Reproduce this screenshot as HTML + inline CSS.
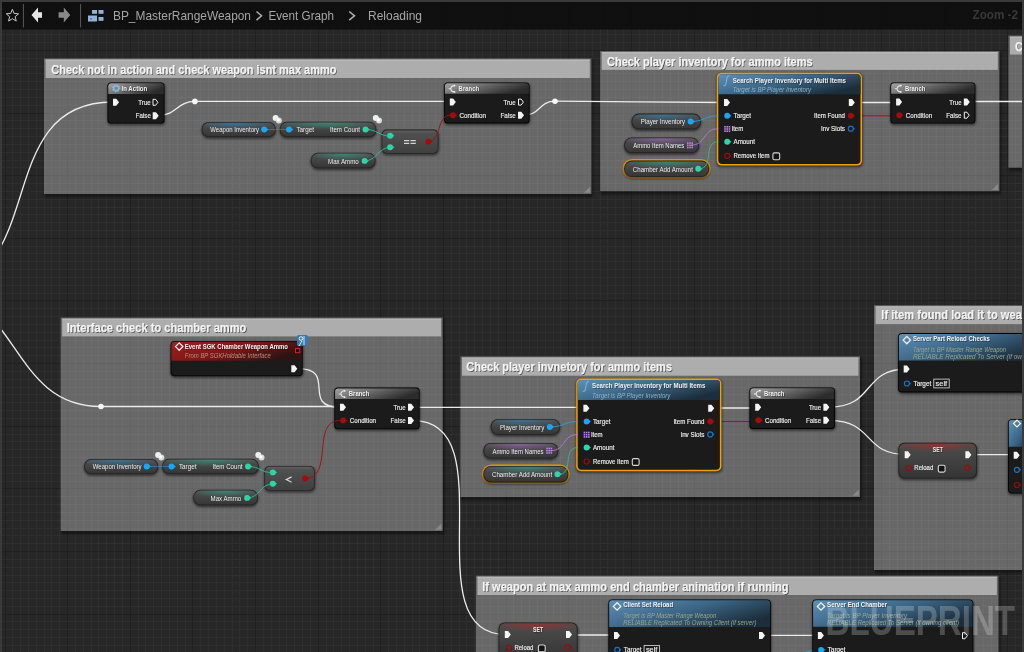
<!DOCTYPE html>
<html><head><meta charset="utf-8"><style>
html,body{margin:0;padding:0;width:1024px;height:652px;overflow:hidden;background:#262626}
svg{display:block;will-change:transform;-webkit-font-smoothing:antialiased;font-family:"Liberation Sans",sans-serif}
</style></head><body>
<svg width="1024" height="652" viewBox="0 0 1024 652">
<defs>
<filter id="blur1" x="-20%" y="-20%" width="140%" height="140%"><feGaussianBlur stdDeviation="1"/></filter>
<filter id="blur2" x="-5%" y="-5%" width="110%" height="110%"><feGaussianBlur stdDeviation="1.5"/></filter>
<linearGradient id="cglow" x1="0" y1="0" x2="1" y2="1"><stop offset="0" stop-color="#fff" stop-opacity="0.06"/><stop offset="0.3" stop-color="#fff" stop-opacity="0"/></linearGradient>
<linearGradient id="gpure" x1="0" y1="0" x2="1" y2="0.4"><stop offset="0" stop-color="#a4a4a4"/><stop offset="0.4" stop-color="#747474"/><stop offset="1" stop-color="#2c2c2c"/></linearGradient>
<linearGradient id="gpill" x1="0" y1="0" x2="0" y2="1"><stop offset="0" stop-color="#505050"/><stop offset="1" stop-color="#363636"/></linearGradient>
<linearGradient id="gop" x1="0" y1="0" x2="0" y2="1"><stop offset="0" stop-color="#666" stop-opacity="0.95"/><stop offset="0.12" stop-color="#545454" stop-opacity="0.92"/><stop offset="1" stop-color="#424242" stop-opacity="0.92"/></linearGradient>
<radialGradient id="tblue" cx="0.45" cy="0" r="0.55"><stop offset="0" stop-color="#2a9ee8" stop-opacity="0.45"/><stop offset="1" stop-color="#2a9ee8" stop-opacity="0"/></radialGradient>
<radialGradient id="tgreen" cx="0.5" cy="0" r="0.55"><stop offset="0" stop-color="#2cd6a8" stop-opacity="0.4"/><stop offset="1" stop-color="#2cd6a8" stop-opacity="0"/></radialGradient>
<linearGradient id="gfunc" x1="0" y1="0" x2="1" y2="0.6"><stop offset="0" stop-color="#5e90b6"/><stop offset="0.5" stop-color="#3d6788"/><stop offset="1" stop-color="#1c2e3c"/></linearGradient>
<linearGradient id="gevent" x1="0" y1="0" x2="1" y2="0.5"><stop offset="0" stop-color="#a21e1e"/><stop offset="0.55" stop-color="#7c1717"/><stop offset="1" stop-color="#2c1414"/></linearGradient>
<linearGradient id="gset" x1="0" y1="0" x2="0" y2="1"><stop offset="0" stop-color="#4d4d4d"/><stop offset="1" stop-color="#353535"/></linearGradient>
<radialGradient id="tpurple" cx="0.5" cy="0" r="0.55"><stop offset="0" stop-color="#c47ef5" stop-opacity="0.45"/><stop offset="1" stop-color="#c47ef5" stop-opacity="0"/></radialGradient>
<radialGradient id="tred" cx="0.5" cy="0" r="0.6"><stop offset="0" stop-color="#c81e1e" stop-opacity="0.55"/><stop offset="1" stop-color="#d02020" stop-opacity="0"/></radialGradient>
</defs>
<rect width="1024" height="652" fill="#262626"/>
<g opacity="1.0">
<rect x="0" y="0" width="1024" height="652" fill="#272727"/>
<path d="M12.5 0V652M20.5 0V652M28.5 0V652M36.5 0V652M44.5 0V652M51.5 0V652M59.5 0V652M75.5 0V652M83.5 0V652M91.5 0V652M98.5 0V652M106.5 0V652M114.5 0V652M122.5 0V652M138.5 0V652M145.5 0V652M153.5 0V652M161.5 0V652M169.5 0V652M177.5 0V652M185.5 0V652M200.5 0V652M208.5 0V652M216.5 0V652M224.5 0V652M232.5 0V652M239.5 0V652M247.5 0V652M263.5 0V652M271.5 0V652M279.5 0V652M286.5 0V652M294.5 0V652M302.5 0V652M310.5 0V652M326.5 0V652M333.5 0V652M341.5 0V652M349.5 0V652M357.5 0V652M365.5 0V652M373.5 0V652M388.5 0V652M396.5 0V652M404.5 0V652M412.5 0V652M419.5 0V652M427.5 0V652M435.5 0V652M451.5 0V652M459.5 0V652M466.5 0V652M474.5 0V652M482.5 0V652M490.5 0V652M498.5 0V652M513.5 0V652M521.5 0V652M529.5 0V652M537.5 0V652M545.5 0V652M553.5 0V652M560.5 0V652M576.5 0V652M584.5 0V652M592.5 0V652M600.5 0V652M607.5 0V652M615.5 0V652M623.5 0V652M639.5 0V652M647.5 0V652M654.5 0V652M662.5 0V652M670.5 0V652M678.5 0V652M686.5 0V652M701.5 0V652M709.5 0V652M717.5 0V652M725.5 0V652M733.5 0V652M741.5 0V652M748.5 0V652M764.5 0V652M772.5 0V652M780.5 0V652M788.5 0V652M795.5 0V652M803.5 0V652M811.5 0V652M827.5 0V652M834.5 0V652M842.5 0V652M850.5 0V652M858.5 0V652M866.5 0V652M874.5 0V652M889.5 0V652M897.5 0V652M905.5 0V652M913.5 0V652M921.5 0V652M928.5 0V652M936.5 0V652M952.5 0V652M960.5 0V652M968.5 0V652M975.5 0V652M983.5 0V652M991.5 0V652M999.5 0V652M1015.5 0V652M1022.5 0V652M0 3.5H1024M0 11.5H1024M0 19.5H1024M0 26.5H1024M0 34.5H1024M0 42.5H1024M0 58.5H1024M0 66.5H1024M0 73.5H1024M0 81.5H1024M0 89.5H1024M0 97.5H1024M0 105.5H1024M0 120.5H1024M0 128.5H1024M0 136.5H1024M0 144.5H1024M0 152.5H1024M0 160.5H1024M0 167.5H1024M0 183.5H1024M0 191.5H1024M0 199.5H1024M0 207.5H1024M0 214.5H1024M0 222.5H1024M0 230.5H1024M0 246.5H1024M0 253.5H1024M0 261.5H1024M0 269.5H1024M0 277.5H1024M0 285.5H1024M0 293.5H1024M0 308.5H1024M0 316.5H1024M0 324.5H1024M0 332.5H1024M0 340.5H1024M0 347.5H1024M0 355.5H1024M0 371.5H1024M0 379.5H1024M0 387.5H1024M0 394.5H1024M0 402.5H1024M0 410.5H1024M0 418.5H1024M0 434.5H1024M0 441.5H1024M0 449.5H1024M0 457.5H1024M0 465.5H1024M0 473.5H1024M0 481.5H1024M0 496.5H1024M0 504.5H1024M0 512.5H1024M0 520.5H1024M0 528.5H1024M0 535.5H1024M0 543.5H1024M0 559.5H1024M0 567.5H1024M0 575.5H1024M0 582.5H1024M0 590.5H1024M0 598.5H1024M0 606.5H1024M0 621.5H1024M0 629.5H1024M0 637.5H1024M0 645.5H1024" stroke="#2e2e2e" stroke-width="1" fill="none"/>
<path d="M5.5 0V652M67.5 0V652M130.5 0V652M192.5 0V652M255.5 0V652M318.5 0V652M380.5 0V652M443.5 0V652M506.5 0V652M568.5 0V652M631.5 0V652M694.5 0V652M756.5 0V652M819.5 0V652M881.5 0V652M944.5 0V652M1007.5 0V652M0 50.5H1024M0 113.5H1024M0 175.5H1024M0 238.5H1024M0 300.5H1024M0 363.5H1024M0 426.5H1024M0 488.5H1024M0 551.5H1024M0 614.5H1024" stroke="#202020" stroke-width="1" fill="none"/>
</g>
<rect x="44.5" y="59.4" width="548.9" height="138.1" fill="#000" opacity="0.38" filter="url(#blur1)"/>
<rect x="44" y="58.4" width="547.4" height="135.6" fill="#262626"/>
<g opacity="1.0">
<rect x="44" y="58.4" width="547.4" height="135.6" fill="#272727"/>
<path d="M44.5 58.4V194M51.5 58.4V194M59.5 58.4V194M75.5 58.4V194M83.5 58.4V194M91.5 58.4V194M98.5 58.4V194M106.5 58.4V194M114.5 58.4V194M122.5 58.4V194M138.5 58.4V194M145.5 58.4V194M153.5 58.4V194M161.5 58.4V194M169.5 58.4V194M177.5 58.4V194M185.5 58.4V194M200.5 58.4V194M208.5 58.4V194M216.5 58.4V194M224.5 58.4V194M232.5 58.4V194M239.5 58.4V194M247.5 58.4V194M263.5 58.4V194M271.5 58.4V194M279.5 58.4V194M286.5 58.4V194M294.5 58.4V194M302.5 58.4V194M310.5 58.4V194M326.5 58.4V194M333.5 58.4V194M341.5 58.4V194M349.5 58.4V194M357.5 58.4V194M365.5 58.4V194M373.5 58.4V194M388.5 58.4V194M396.5 58.4V194M404.5 58.4V194M412.5 58.4V194M419.5 58.4V194M427.5 58.4V194M435.5 58.4V194M451.5 58.4V194M459.5 58.4V194M466.5 58.4V194M474.5 58.4V194M482.5 58.4V194M490.5 58.4V194M498.5 58.4V194M513.5 58.4V194M521.5 58.4V194M529.5 58.4V194M537.5 58.4V194M545.5 58.4V194M553.5 58.4V194M560.5 58.4V194M576.5 58.4V194M584.5 58.4V194M44 66.5H591.4M44 73.5H591.4M44 81.5H591.4M44 89.5H591.4M44 97.5H591.4M44 105.5H591.4M44 120.5H591.4M44 128.5H591.4M44 136.5H591.4M44 144.5H591.4M44 152.5H591.4M44 160.5H591.4M44 167.5H591.4M44 183.5H591.4M44 191.5H591.4" stroke="#2e2e2e" stroke-width="1" fill="none"/>
<path d="M67.5 58.4V194M130.5 58.4V194M192.5 58.4V194M255.5 58.4V194M318.5 58.4V194M380.5 58.4V194M443.5 58.4V194M506.5 58.4V194M568.5 58.4V194M44 113.5H591.4M44 175.5H591.4" stroke="#222222" stroke-width="1" fill="none"/>
</g>
<rect x="44" y="58.4" width="547.4" height="135.6" fill="#ffffff" fill-opacity="0.3"/>
<rect x="45.6" y="59.6" width="544.1999999999999" height="18.400000000000002" fill="#adadad"/>
<rect x="45.6" y="59.6" width="544.1999999999999" height="1" fill="#bdbdbd"/>
<text x="52.1" y="74.6" font-size="12.6" font-weight="bold" font-style="normal" fill="#000" fill-opacity="0.55" text-anchor="start" textLength="285.2" lengthAdjust="spacingAndGlyphs">Check not in action and check weapon isnt max ammo</text>
<text x="51.3" y="73.8" font-size="12.6" font-weight="bold" font-style="normal" fill="#f4f4f4" text-anchor="start" textLength="285.2" lengthAdjust="spacingAndGlyphs" stroke="#f4f4f4" stroke-width="0.25">Check not in action and check weapon isnt max ammo</text>
<path d="M583.8 192.8L590.1999999999999 192.8L590.1999999999999 186.4Z" fill="#909090" fill-opacity="0.8"/>
<rect x="600.6" y="52" width="400.79999999999995" height="142.7" fill="#000" opacity="0.38" filter="url(#blur1)"/>
<rect x="600.1" y="51" width="399.29999999999995" height="140.2" fill="#262626"/>
<g opacity="1.0">
<rect x="600.1" y="51" width="399.29999999999995" height="140.2" fill="#272727"/>
<path d="M607.5 51V191.2M615.5 51V191.2M623.5 51V191.2M639.5 51V191.2M647.5 51V191.2M654.5 51V191.2M662.5 51V191.2M670.5 51V191.2M678.5 51V191.2M686.5 51V191.2M701.5 51V191.2M709.5 51V191.2M717.5 51V191.2M725.5 51V191.2M733.5 51V191.2M741.5 51V191.2M748.5 51V191.2M764.5 51V191.2M772.5 51V191.2M780.5 51V191.2M788.5 51V191.2M795.5 51V191.2M803.5 51V191.2M811.5 51V191.2M827.5 51V191.2M834.5 51V191.2M842.5 51V191.2M850.5 51V191.2M858.5 51V191.2M866.5 51V191.2M874.5 51V191.2M889.5 51V191.2M897.5 51V191.2M905.5 51V191.2M913.5 51V191.2M921.5 51V191.2M928.5 51V191.2M936.5 51V191.2M952.5 51V191.2M960.5 51V191.2M968.5 51V191.2M975.5 51V191.2M983.5 51V191.2M991.5 51V191.2M600.1 58.5H999.4M600.1 66.5H999.4M600.1 73.5H999.4M600.1 81.5H999.4M600.1 89.5H999.4M600.1 97.5H999.4M600.1 105.5H999.4M600.1 120.5H999.4M600.1 128.5H999.4M600.1 136.5H999.4M600.1 144.5H999.4M600.1 152.5H999.4M600.1 160.5H999.4M600.1 167.5H999.4M600.1 183.5H999.4" stroke="#2e2e2e" stroke-width="1" fill="none"/>
<path d="M631.5 51V191.2M694.5 51V191.2M756.5 51V191.2M819.5 51V191.2M881.5 51V191.2M944.5 51V191.2M600.1 113.5H999.4M600.1 175.5H999.4" stroke="#222222" stroke-width="1" fill="none"/>
</g>
<rect x="600.1" y="51" width="399.29999999999995" height="140.2" fill="#ffffff" fill-opacity="0.3"/>
<rect x="601.7" y="52.2" width="396.09999999999997" height="17.700000000000006" fill="#adadad"/>
<rect x="601.7" y="52.2" width="396.09999999999997" height="1" fill="#bdbdbd"/>
<text x="607.8" y="66.6" font-size="12.6" font-weight="bold" font-style="normal" fill="#000" fill-opacity="0.55" text-anchor="start" textLength="205.6" lengthAdjust="spacingAndGlyphs">Check player inventory for ammo items</text>
<text x="607.0" y="65.8" font-size="12.6" font-weight="bold" font-style="normal" fill="#f4f4f4" text-anchor="start" textLength="205.6" lengthAdjust="spacingAndGlyphs" stroke="#f4f4f4" stroke-width="0.25">Check player inventory for ammo items</text>
<path d="M991.8 190.0L998.1999999999999 190.0L998.1999999999999 183.6Z" fill="#909090" fill-opacity="0.8"/>
<rect x="1008.9" y="36.5" width="33.10000000000002" height="134.7" fill="#000" opacity="0.38" filter="url(#blur1)"/>
<rect x="1008.4" y="35.5" width="31.600000000000023" height="132.2" fill="#262626"/>
<g opacity="1.0">
<rect x="1008.4" y="35.5" width="31.600000000000023" height="132.2" fill="#272727"/>
<path d="M1015.5 35.5V167.7M1022.5 35.5V167.7M1030.5 35.5V167.7M1038.5 35.5V167.7M1008.4 42.5H1040M1008.4 58.5H1040M1008.4 66.5H1040M1008.4 73.5H1040M1008.4 81.5H1040M1008.4 89.5H1040M1008.4 97.5H1040M1008.4 105.5H1040M1008.4 120.5H1040M1008.4 128.5H1040M1008.4 136.5H1040M1008.4 144.5H1040M1008.4 152.5H1040M1008.4 160.5H1040" stroke="#2e2e2e" stroke-width="1" fill="none"/>
<path d="M1008.4 50.5H1040M1008.4 113.5H1040" stroke="#222222" stroke-width="1" fill="none"/>
</g>
<rect x="1008.4" y="35.5" width="31.600000000000023" height="132.2" fill="#ffffff" fill-opacity="0.3"/>
<rect x="1010.0" y="36.7" width="28.400000000000023" height="17.8" fill="#adadad"/>
<rect x="1010.0" y="36.7" width="28.400000000000023" height="1" fill="#bdbdbd"/>
<text x="1015.8" y="51.3" font-size="12.6" font-weight="bold" font-style="normal" fill="#000" fill-opacity="0.55" text-anchor="start" textLength="48.0" lengthAdjust="spacingAndGlyphs">Chamber</text>
<text x="1015.0" y="50.5" font-size="12.6" font-weight="bold" font-style="normal" fill="#f4f4f4" text-anchor="start" textLength="48.0" lengthAdjust="spacingAndGlyphs" stroke="#f4f4f4" stroke-width="0.25">Chamber</text>
<path d="M1032.4 166.5L1038.8 166.5L1038.8 160.1Z" fill="#909090" fill-opacity="0.8"/>
<rect x="61.1" y="318.5" width="383.59999999999997" height="216.0" fill="#000" opacity="0.38" filter="url(#blur1)"/>
<rect x="60.6" y="317.5" width="382.09999999999997" height="213.5" fill="#262626"/>
<g opacity="1.0">
<rect x="60.6" y="317.5" width="382.09999999999997" height="213.5" fill="#272727"/>
<path d="M75.5 317.5V531M83.5 317.5V531M91.5 317.5V531M98.5 317.5V531M106.5 317.5V531M114.5 317.5V531M122.5 317.5V531M138.5 317.5V531M145.5 317.5V531M153.5 317.5V531M161.5 317.5V531M169.5 317.5V531M177.5 317.5V531M185.5 317.5V531M200.5 317.5V531M208.5 317.5V531M216.5 317.5V531M224.5 317.5V531M232.5 317.5V531M239.5 317.5V531M247.5 317.5V531M263.5 317.5V531M271.5 317.5V531M279.5 317.5V531M286.5 317.5V531M294.5 317.5V531M302.5 317.5V531M310.5 317.5V531M326.5 317.5V531M333.5 317.5V531M341.5 317.5V531M349.5 317.5V531M357.5 317.5V531M365.5 317.5V531M373.5 317.5V531M388.5 317.5V531M396.5 317.5V531M404.5 317.5V531M412.5 317.5V531M419.5 317.5V531M427.5 317.5V531M435.5 317.5V531M60.6 324.5H442.7M60.6 332.5H442.7M60.6 340.5H442.7M60.6 347.5H442.7M60.6 355.5H442.7M60.6 371.5H442.7M60.6 379.5H442.7M60.6 387.5H442.7M60.6 394.5H442.7M60.6 402.5H442.7M60.6 410.5H442.7M60.6 418.5H442.7M60.6 434.5H442.7M60.6 441.5H442.7M60.6 449.5H442.7M60.6 457.5H442.7M60.6 465.5H442.7M60.6 473.5H442.7M60.6 481.5H442.7M60.6 496.5H442.7M60.6 504.5H442.7M60.6 512.5H442.7M60.6 520.5H442.7M60.6 528.5H442.7" stroke="#2e2e2e" stroke-width="1" fill="none"/>
<path d="M67.5 317.5V531M130.5 317.5V531M192.5 317.5V531M255.5 317.5V531M318.5 317.5V531M380.5 317.5V531M60.6 363.5H442.7M60.6 426.5H442.7M60.6 488.5H442.7" stroke="#222222" stroke-width="1" fill="none"/>
</g>
<rect x="60.6" y="317.5" width="382.09999999999997" height="213.5" fill="#ffffff" fill-opacity="0.3"/>
<rect x="62.2" y="318.7" width="378.9" height="17.699999999999978" fill="#adadad"/>
<rect x="62.2" y="318.7" width="378.9" height="1" fill="#bdbdbd"/>
<text x="67.5" y="332.7" font-size="12.6" font-weight="bold" font-style="normal" fill="#000" fill-opacity="0.55" text-anchor="start" textLength="179.7" lengthAdjust="spacingAndGlyphs">Interface check to chamber ammo</text>
<text x="66.7" y="331.9" font-size="12.6" font-weight="bold" font-style="normal" fill="#f4f4f4" text-anchor="start" textLength="179.7" lengthAdjust="spacingAndGlyphs" stroke="#f4f4f4" stroke-width="0.25">Interface check to chamber ammo</text>
<path d="M435.09999999999997 529.8L441.5 529.8L441.5 523.4Z" fill="#909090" fill-opacity="0.8"/>
<rect x="460.9" y="357.4" width="401.1" height="143.10000000000002" fill="#000" opacity="0.38" filter="url(#blur1)"/>
<rect x="460.4" y="356.4" width="399.6" height="140.60000000000002" fill="#262626"/>
<g opacity="1.0">
<rect x="460.4" y="356.4" width="399.6" height="140.60000000000002" fill="#272727"/>
<path d="M466.5 356.4V497M474.5 356.4V497M482.5 356.4V497M490.5 356.4V497M498.5 356.4V497M513.5 356.4V497M521.5 356.4V497M529.5 356.4V497M537.5 356.4V497M545.5 356.4V497M553.5 356.4V497M560.5 356.4V497M576.5 356.4V497M584.5 356.4V497M592.5 356.4V497M600.5 356.4V497M607.5 356.4V497M615.5 356.4V497M623.5 356.4V497M639.5 356.4V497M647.5 356.4V497M654.5 356.4V497M662.5 356.4V497M670.5 356.4V497M678.5 356.4V497M686.5 356.4V497M701.5 356.4V497M709.5 356.4V497M717.5 356.4V497M725.5 356.4V497M733.5 356.4V497M741.5 356.4V497M748.5 356.4V497M764.5 356.4V497M772.5 356.4V497M780.5 356.4V497M788.5 356.4V497M795.5 356.4V497M803.5 356.4V497M811.5 356.4V497M827.5 356.4V497M834.5 356.4V497M842.5 356.4V497M850.5 356.4V497M858.5 356.4V497M460.4 371.5H860M460.4 379.5H860M460.4 387.5H860M460.4 394.5H860M460.4 402.5H860M460.4 410.5H860M460.4 418.5H860M460.4 434.5H860M460.4 441.5H860M460.4 449.5H860M460.4 457.5H860M460.4 465.5H860M460.4 473.5H860M460.4 481.5H860M460.4 496.5H860" stroke="#2e2e2e" stroke-width="1" fill="none"/>
<path d="M506.5 356.4V497M568.5 356.4V497M631.5 356.4V497M694.5 356.4V497M756.5 356.4V497M819.5 356.4V497M460.4 363.5H860M460.4 426.5H860M460.4 488.5H860" stroke="#222222" stroke-width="1" fill="none"/>
</g>
<rect x="460.4" y="356.4" width="399.6" height="140.60000000000002" fill="#ffffff" fill-opacity="0.3"/>
<rect x="462.0" y="357.59999999999997" width="396.40000000000003" height="18.100000000000012" fill="#adadad"/>
<rect x="462.0" y="357.59999999999997" width="396.40000000000003" height="1" fill="#bdbdbd"/>
<text x="467.1" y="371.9" font-size="12.6" font-weight="bold" font-style="normal" fill="#000" fill-opacity="0.55" text-anchor="start" textLength="205.7" lengthAdjust="spacingAndGlyphs">Check player invnetory for ammo items</text>
<text x="466.3" y="371.1" font-size="12.6" font-weight="bold" font-style="normal" fill="#f4f4f4" text-anchor="start" textLength="205.7" lengthAdjust="spacingAndGlyphs" stroke="#f4f4f4" stroke-width="0.25">Check player invnetory for ammo items</text>
<path d="M852.4 495.8L858.8 495.8L858.8 489.4Z" fill="#909090" fill-opacity="0.8"/>
<rect x="874.5" y="306.2" width="167.5" height="267.3" fill="#000" opacity="0.38" filter="url(#blur1)"/>
<rect x="874" y="305.2" width="166" height="264.8" fill="#262626"/>
<g opacity="1.0">
<rect x="874" y="305.2" width="166" height="264.8" fill="#272727"/>
<path d="M874.5 305.2V570M889.5 305.2V570M897.5 305.2V570M905.5 305.2V570M913.5 305.2V570M921.5 305.2V570M928.5 305.2V570M936.5 305.2V570M952.5 305.2V570M960.5 305.2V570M968.5 305.2V570M975.5 305.2V570M983.5 305.2V570M991.5 305.2V570M999.5 305.2V570M1015.5 305.2V570M1022.5 305.2V570M1030.5 305.2V570M1038.5 305.2V570M874 308.5H1040M874 316.5H1040M874 324.5H1040M874 332.5H1040M874 340.5H1040M874 347.5H1040M874 355.5H1040M874 371.5H1040M874 379.5H1040M874 387.5H1040M874 394.5H1040M874 402.5H1040M874 410.5H1040M874 418.5H1040M874 434.5H1040M874 441.5H1040M874 449.5H1040M874 457.5H1040M874 465.5H1040M874 473.5H1040M874 481.5H1040M874 496.5H1040M874 504.5H1040M874 512.5H1040M874 520.5H1040M874 528.5H1040M874 535.5H1040M874 543.5H1040M874 559.5H1040M874 567.5H1040" stroke="#2e2e2e" stroke-width="1" fill="none"/>
<path d="M881.5 305.2V570M944.5 305.2V570M1007.5 305.2V570M874 363.5H1040M874 426.5H1040M874 488.5H1040M874 551.5H1040" stroke="#222222" stroke-width="1" fill="none"/>
</g>
<rect x="874" y="305.2" width="166" height="264.8" fill="#ffffff" fill-opacity="0.3"/>
<rect x="875.6" y="306.4" width="162.8" height="17.700000000000035" fill="#adadad"/>
<rect x="875.6" y="306.4" width="162.8" height="1" fill="#bdbdbd"/>
<text x="882.1" y="319.6" font-size="12.6" font-weight="bold" font-style="normal" fill="#000" fill-opacity="0.55" text-anchor="start" textLength="161.0" lengthAdjust="spacingAndGlyphs">If item found load it to weapon</text>
<text x="881.3" y="318.8" font-size="12.6" font-weight="bold" font-style="normal" fill="#f4f4f4" text-anchor="start" textLength="161.0" lengthAdjust="spacingAndGlyphs" stroke="#f4f4f4" stroke-width="0.25">If item found load it to weapon</text>
<path d="M1032.4 568.8L1038.8 568.8L1038.8 562.4Z" fill="#909090" fill-opacity="0.8"/>
<rect x="476.3" y="576.6" width="524.2" height="116.89999999999998" fill="#000" opacity="0.38" filter="url(#blur1)"/>
<rect x="475.8" y="575.6" width="522.7" height="114.39999999999998" fill="#262626"/>
<g opacity="1.0">
<rect x="475.8" y="575.6" width="522.7" height="114.39999999999998" fill="#272727"/>
<path d="M482.5 575.6V690M490.5 575.6V690M498.5 575.6V690M513.5 575.6V690M521.5 575.6V690M529.5 575.6V690M537.5 575.6V690M545.5 575.6V690M553.5 575.6V690M560.5 575.6V690M576.5 575.6V690M584.5 575.6V690M592.5 575.6V690M600.5 575.6V690M607.5 575.6V690M615.5 575.6V690M623.5 575.6V690M639.5 575.6V690M647.5 575.6V690M654.5 575.6V690M662.5 575.6V690M670.5 575.6V690M678.5 575.6V690M686.5 575.6V690M701.5 575.6V690M709.5 575.6V690M717.5 575.6V690M725.5 575.6V690M733.5 575.6V690M741.5 575.6V690M748.5 575.6V690M764.5 575.6V690M772.5 575.6V690M780.5 575.6V690M788.5 575.6V690M795.5 575.6V690M803.5 575.6V690M811.5 575.6V690M827.5 575.6V690M834.5 575.6V690M842.5 575.6V690M850.5 575.6V690M858.5 575.6V690M866.5 575.6V690M874.5 575.6V690M889.5 575.6V690M897.5 575.6V690M905.5 575.6V690M913.5 575.6V690M921.5 575.6V690M928.5 575.6V690M936.5 575.6V690M952.5 575.6V690M960.5 575.6V690M968.5 575.6V690M975.5 575.6V690M983.5 575.6V690M991.5 575.6V690M475.8 582.5H998.5M475.8 590.5H998.5M475.8 598.5H998.5M475.8 606.5H998.5M475.8 621.5H998.5M475.8 629.5H998.5M475.8 637.5H998.5M475.8 645.5H998.5M475.8 653.5H998.5M475.8 661.5H998.5M475.8 668.5H998.5M475.8 684.5H998.5" stroke="#2e2e2e" stroke-width="1" fill="none"/>
<path d="M506.5 575.6V690M568.5 575.6V690M631.5 575.6V690M694.5 575.6V690M756.5 575.6V690M819.5 575.6V690M881.5 575.6V690M944.5 575.6V690M475.8 614.5H998.5M475.8 676.5H998.5" stroke="#222222" stroke-width="1" fill="none"/>
</g>
<rect x="475.8" y="575.6" width="522.7" height="114.39999999999998" fill="#ffffff" fill-opacity="0.3"/>
<rect x="477.40000000000003" y="576.8000000000001" width="519.5" height="18.199999999999978" fill="#adadad"/>
<rect x="477.40000000000003" y="576.8000000000001" width="519.5" height="1" fill="#bdbdbd"/>
<text x="483.0" y="591.7" font-size="12.6" font-weight="bold" font-style="normal" fill="#000" fill-opacity="0.55" text-anchor="start" textLength="306.4" lengthAdjust="spacingAndGlyphs">If weapon at max ammo end chamber animation if running</text>
<text x="482.2" y="590.9" font-size="12.6" font-weight="bold" font-style="normal" fill="#f4f4f4" text-anchor="start" textLength="306.4" lengthAdjust="spacingAndGlyphs" stroke="#f4f4f4" stroke-width="0.25">If weapon at max ammo end chamber animation if running</text>
<path d="M990.9 688.8L997.3 688.8L997.3 682.4Z" fill="#909090" fill-opacity="0.8"/>
<path d="M-72.2 289.4C53.8 289.4 -13 102 113 102" fill="none" stroke="#ececec" stroke-width="1.3" stroke-opacity="1" stroke-linecap="round"/>
<path d="M-72.2 289.4C20.5 289.4 8.299999999999997 406.5 101 406.5" fill="none" stroke="#ececec" stroke-width="1.3" stroke-opacity="1" stroke-linecap="round"/>
<path d="M101 406.5H337" fill="none" stroke="#ececec" stroke-width="1.3" stroke-opacity="1" stroke-linecap="round"/>
<circle cx="101" cy="406.5" r="2.8" fill="#f6f6f6"/>
<path d="M159 115.2C177 115.2 176.9 101.4 194.9 101.4" fill="none" stroke="#ececec" stroke-width="1.3" stroke-opacity="1" stroke-linecap="round"/>
<path d="M194.9 101.4H450" fill="none" stroke="#ececec" stroke-width="1.3" stroke-opacity="1" stroke-linecap="round"/>
<circle cx="194.9" cy="101.4" r="2.8" fill="#f6f6f6"/>
<path d="M524 115.2C540 115.2 539 101.2 555 101.2" fill="none" stroke="#ececec" stroke-width="1.3" stroke-opacity="1" stroke-linecap="round"/>
<path d="M555 101.2C615 101.2 666 102.5 726 102.5" fill="none" stroke="#ececec" stroke-width="1.3" stroke-opacity="1" stroke-linecap="round"/>
<circle cx="555" cy="101.2" r="2.8" fill="#f6f6f6"/>
<path d="M854 102.5H896" fill="none" stroke="#ececec" stroke-width="1.3" stroke-opacity="1" stroke-linecap="round"/>
<path d="M975 101.5H1024" fill="none" stroke="#ececec" stroke-width="1.3" stroke-opacity="1" stroke-linecap="round"/>
<path d="M852 115.8H896" fill="none" stroke="#b01010" stroke-width="1" stroke-opacity="1" stroke-linecap="round"/>
<path d="M298 368.6C338 368.6 300 407.3 340 407.3" fill="none" stroke="#ececec" stroke-width="1.3" stroke-opacity="1" stroke-linecap="round"/>
<path d="M414 407.3H584" fill="none" stroke="#ececec" stroke-width="1.3" stroke-opacity="1" stroke-linecap="round"/>
<path d="M413 420.7C508 420.7 411 634.5 506 634.5" fill="none" stroke="#ececec" stroke-width="1.3" stroke-opacity="1" stroke-linecap="round"/>
<path d="M713 408H756" fill="none" stroke="#ececec" stroke-width="1.3" stroke-opacity="1" stroke-linecap="round"/>
<path d="M711 421.5H756" fill="none" stroke="#b01010" stroke-width="1" stroke-opacity="1" stroke-linecap="round"/>
<path d="M830 407C875 407 862 369 907 369" fill="none" stroke="#ececec" stroke-width="1.3" stroke-opacity="1" stroke-linecap="round"/>
<path d="M830 420.7C875 420.7 862 454.6 907 454.6" fill="none" stroke="#ececec" stroke-width="1.3" stroke-opacity="1" stroke-linecap="round"/>
<path d="M972 454.6H1014" fill="none" stroke="#ececec" stroke-width="1.3" stroke-opacity="1" stroke-linecap="round"/>
<path d="M571 635H615" fill="none" stroke="#ececec" stroke-width="1.3" stroke-opacity="1" stroke-linecap="round"/>
<path d="M765 635.4H819" fill="none" stroke="#ececec" stroke-width="1.3" stroke-opacity="1" stroke-linecap="round"/>
<path d="M780 660C800 660 799 650 819 650" fill="none" stroke="#22a6f2" stroke-width="1" stroke-opacity="1" stroke-linecap="round"/>
<path d="M-20 650H0" fill="none" stroke="#ececec" stroke-width="1" stroke-opacity="1" stroke-linecap="round"/>
<rect x="107.0" y="83.0" width="58.5" height="42.5" rx="4.5" fill="#000" opacity="0.45" filter="url(#blur1)"/>
<rect x="107.5" y="82.5" width="57.0" height="41.0" rx="3.5" fill="#000"/>
<rect x="108.3" y="83.3" width="55.4" height="39.4" rx="3.0" fill="#1b1b1b"/>
<path d="M108.3 94V86.3Q108.3 83.3 111.3 83.3H160.7Q163.7 83.3 163.7 86.3V94Z" fill="url(#gpure)"/>
<text x="122.3" y="91.6" font-size="8" font-weight="bold" font-style="normal" fill="#000" fill-opacity="0.35" text-anchor="start" textLength="25.8" lengthAdjust="spacingAndGlyphs">In Action</text>
<text x="121.5" y="90.8" font-size="8" font-weight="bold" font-style="normal" fill="#f0f0f0" text-anchor="start" textLength="25.8" lengthAdjust="spacingAndGlyphs" >In Action</text>
<circle cx="116.1" cy="88.2" r="2.5" fill="none" stroke="#8ab8e0" stroke-width="1.5"/><circle cx="116.1" cy="88.2" r="3.6" fill="none" stroke="#8ab8e0" stroke-width="1.3" stroke-dasharray="1.2 1.63"/>
<path d="M113 98.8H116.3L119 102.3L116.3 105.8H113Z" fill="#f4f4f4"/>
<text x="138.3" y="104.8" font-size="8" font-weight="normal" font-style="normal" fill="#ececec" text-anchor="start" textLength="12.5" lengthAdjust="spacingAndGlyphs" stroke="#ececec" stroke-width="0.18">True</text>
<path d="M153.0 99.3H155.6L157.9 102.3L155.6 105.3H153.0Z" fill="none" stroke="#f4f4f4" stroke-width="1"/>
<text x="135.8" y="117.9" font-size="8" font-weight="normal" font-style="normal" fill="#ececec" text-anchor="start" textLength="15.0" lengthAdjust="spacingAndGlyphs" stroke="#ececec" stroke-width="0.18">False</text>
<path d="M152.7 112.3H156.0L158.7 115.8L156.0 119.3H152.7Z" fill="#f4f4f4"/>
<rect x="201.2" y="123" width="75.0" height="16" rx="7.5" fill="#000" opacity="0.5" filter="url(#blur1)"/>
<rect x="201.7" y="122" width="74.0" height="15" rx="7.0" fill="#222"/>
<rect x="202.5" y="122.8" width="72.4" height="13.4" rx="6.3" fill="url(#gpill)"/>
<rect x="202.5" y="122.8" width="72.4" height="13.4" rx="6.3" fill="url(#tblue)"/>
<text x="210.3" y="132.4" font-size="7.6" font-weight="normal" font-style="normal" fill="#ececec" text-anchor="start" textLength="48.7" lengthAdjust="spacingAndGlyphs" >Weapon Inventory</text>
<circle cx="264.2" cy="129.5" r="2.95" fill="#1aa5f5"/><path d="M266.5 128.1L268.5 129.5L266.5 130.9Z" fill="#1aa5f5"/>
<rect x="279.2" y="122.8" width="97.60000000000002" height="16.200000000000003" rx="7.600000000000001" fill="#000" opacity="0.5" filter="url(#blur1)"/>
<rect x="279.7" y="121.8" width="96.60000000000002" height="15.200000000000003" rx="7.100000000000001" fill="#222"/>
<rect x="280.5" y="122.6" width="95.00000000000003" height="13.600000000000003" rx="6.400000000000001" fill="url(#gpill)"/>
<rect x="280.5" y="122.6" width="95.00000000000003" height="13.600000000000003" rx="6.400000000000001" fill="url(#tgreen)"/>
<circle cx="289.0" cy="129.5" r="2.95" fill="#1aa5f5"/><path d="M291.3 128.1L293.3 129.5L291.3 130.9Z" fill="#1aa5f5"/>
<text x="296.4" y="132.4" font-size="7.6" font-weight="normal" font-style="normal" fill="#ececec" text-anchor="start" textLength="17.6" lengthAdjust="spacingAndGlyphs" >Target</text>
<text x="330.0" y="132.4" font-size="7.6" font-weight="normal" font-style="normal" fill="#ececec" text-anchor="start" textLength="30.0" lengthAdjust="spacingAndGlyphs" >Item Count</text>
<circle cx="365.5" cy="129.5" r="2.95" fill="#2cd6a8"/><path d="M367.8 128.1L369.8 129.5L367.8 130.9Z" fill="#2cd6a8"/>
<rect x="310.3" y="153.8" width="65.69999999999999" height="16.5" rx="7.75" fill="#000" opacity="0.5" filter="url(#blur1)"/>
<rect x="310.8" y="152.8" width="64.69999999999999" height="15.5" rx="7.25" fill="#222"/>
<rect x="311.6" y="153.60000000000002" width="63.09999999999999" height="13.9" rx="6.55" fill="url(#gpill)"/>
<rect x="311.6" y="153.60000000000002" width="63.09999999999999" height="13.9" rx="6.55" fill="url(#tgreen)"/>
<text x="328.0" y="163.8" font-size="7.6" font-weight="normal" font-style="normal" fill="#ececec" text-anchor="start" textLength="30.8" lengthAdjust="spacingAndGlyphs" >Max Ammo</text>
<circle cx="364.59999999999997" cy="160.9" r="2.95" fill="#2cd6a8"/><path d="M366.9 159.5L368.9 160.9L366.9 162.3Z" fill="#2cd6a8"/>
<circle cx="275.6" cy="118" r="3" fill="#f0f0f0"/><circle cx="278.8" cy="120.6" r="3" fill="#dadada"/><circle cx="278.20000000000005" cy="119.8" r="1.6" fill="#ffffff"/>
<circle cx="375.8" cy="118" r="3" fill="#f0f0f0"/><circle cx="379.0" cy="120.6" r="3" fill="#dadada"/><circle cx="378.40000000000003" cy="119.8" r="1.6" fill="#ffffff"/>
<rect x="381.1" y="130.1" width="58.299999999999955" height="25.599999999999994" rx="6" fill="#000" opacity="0.45" filter="url(#blur1)"/>
<rect x="381.6" y="129.6" width="56.799999999999955" height="24.099999999999994" rx="5" fill="#262626"/>
<rect x="382.40000000000003" y="130.4" width="55.19999999999995" height="22.499999999999993" rx="4.5" fill="url(#gop)"/>
<circle cx="390.09999999999997" cy="135.8" r="2.95" fill="#2cd6a8"/><path d="M392.4 134.4L394.4 135.8L392.4 137.20000000000002Z" fill="#2cd6a8"/>
<circle cx="390.09999999999997" cy="147.3" r="2.95" fill="#2cd6a8"/><path d="M392.4 145.9L394.4 147.3L392.4 148.70000000000002Z" fill="#2cd6a8"/>
<path d="M404 140.6H409.2M404 143.4H409.2M410.5 140.6H415.8M410.5 143.4H415.8" stroke="#d4d4d4" stroke-width="1.2"/>
<circle cx="428.2" cy="141.6" r="2.95" fill="#a50b0b"/><path d="M430.5 140.2L432.5 141.6L430.5 143.0Z" fill="#a50b0b"/>
<rect x="443.6" y="82.9" width="87.0" height="42.5" rx="4.5" fill="#000" opacity="0.45" filter="url(#blur1)"/>
<rect x="444.1" y="82.4" width="85.5" height="41.0" rx="3.5" fill="#000"/>
<rect x="444.90000000000003" y="83.2" width="83.9" height="39.4" rx="3.0" fill="#1b1b1b"/>
<path d="M444.90000000000003 93.80000000000001V86.2Q444.90000000000003 83.2 447.90000000000003 83.2H525.8000000000001Q528.8000000000001 83.2 528.8000000000001 86.2V93.80000000000001Z" fill="url(#gpure)"/>
<text x="459.4" y="91.4" font-size="8" font-weight="bold" font-style="normal" fill="#000" fill-opacity="0.35" text-anchor="start" textLength="20.5" lengthAdjust="spacingAndGlyphs">Branch</text>
<text x="458.6" y="90.6" font-size="8" font-weight="bold" font-style="normal" fill="#f0f0f0" text-anchor="start" textLength="20.5" lengthAdjust="spacingAndGlyphs" >Branch</text>
<path d="M448.5 88.80000000000001L450.70000000000005 88.80000000000001Q451.3 85.60000000000001 454.3 85.60000000000001M450.70000000000005 88.80000000000001Q451.3 91.9 454.3 91.9" fill="none" stroke="#e4e4e4" stroke-width="1.1"/><circle cx="454.5" cy="85.60000000000001" r="0.9" fill="#eee"/><circle cx="454.5" cy="91.9" r="0.9" fill="#eee"/>
<path d="M449.8 98.60000000000001H453.1L455.8 102.10000000000001L453.1 105.60000000000001H449.8Z" fill="#f4f4f4"/>
<circle cx="453.0" cy="115.2" r="2.95" fill="#a50b0b"/><path d="M455.3 113.8L457.3 115.2L455.3 116.60000000000001Z" fill="#a50b0b"/>
<text x="459.5" y="117.8" font-size="8" font-weight="normal" font-style="normal" fill="#ececec" text-anchor="start" textLength="26.4" lengthAdjust="spacingAndGlyphs" stroke="#ececec" stroke-width="0.18">Condition</text>
<text x="503.5" y="104.7" font-size="8" font-weight="normal" font-style="normal" fill="#ececec" text-anchor="start" textLength="12.2" lengthAdjust="spacingAndGlyphs" stroke="#ececec" stroke-width="0.18">True</text>
<path d="M518.5 99.10000000000001H521.1L523.4 102.10000000000001L521.1 105.10000000000001H518.5Z" fill="none" stroke="#f4f4f4" stroke-width="1"/>
<text x="500.5" y="117.8" font-size="8" font-weight="normal" font-style="normal" fill="#ececec" text-anchor="start" textLength="15.2" lengthAdjust="spacingAndGlyphs" stroke="#ececec" stroke-width="0.18">False</text>
<path d="M518.0 111.7H521.3L524.0 115.2L521.3 118.7H518.0Z" fill="#f4f4f4"/>
<rect x="716.3" y="73.3" width="146.70000000000005" height="94.3" rx="5" fill="#000" opacity="0.45" filter="url(#blur1)"/>
<rect x="716.8" y="72.8" width="145.20000000000005" height="92.8" rx="5" fill="#f0a000"/>
<rect x="718.3" y="74.3" width="142.20000000000005" height="89.8" rx="4" fill="#1b1b1b"/>
<path d="M718.3 94.3V77.3Q718.3 74.3 721.3 74.3H857.5Q860.5 74.3 860.5 77.3V94.3Z" fill="url(#gfunc)"/>
<path d="M729.4 76.0Q727.4 75.39999999999999 726.8 78.8L726.0 83.39999999999999Q725.4 86.39999999999999 723.4 85.39999999999999" fill="none" stroke="#6fb4e8" stroke-width="1.1"/>
<text x="733.5" y="83.5" font-size="8" font-weight="bold" font-style="normal" fill="#000" fill-opacity="0.35" text-anchor="start" textLength="113.3" lengthAdjust="spacingAndGlyphs">Search Player Inventory for Multi Items</text>
<text x="732.7" y="82.7" font-size="8" font-weight="bold" font-style="normal" fill="#f0f0f0" text-anchor="start" textLength="113.3" lengthAdjust="spacingAndGlyphs" >Search Player Inventory for Multi Items</text>
<text x="732.7" y="92.0" font-size="7.6" font-weight="normal" font-style="italic" fill="#8fb0c4" text-anchor="start" textLength="78.3" lengthAdjust="spacingAndGlyphs" >Target is BP Player Inventory</text>
<path d="M724 99.0H727.3L730 102.5L727.3 106.0H724Z" fill="#f4f4f4"/>
<path d="M848.8 99.0H852.0999999999999L854.8 102.5L852.0999999999999 106.0H848.8Z" fill="#f4f4f4"/>
<circle cx="727.2" cy="115.8" r="2.95" fill="#1aa5f5"/><path d="M729.5 114.39999999999999L731.5 115.8L729.5 117.2Z" fill="#1aa5f5"/>
<text x="733.5" y="118.3" font-size="7.8" font-weight="normal" font-style="normal" fill="#ececec" text-anchor="start" textLength="17.5" lengthAdjust="spacingAndGlyphs" stroke="#ececec" stroke-width="0.18">Target</text>
<rect x="724.2" y="126.0" width="1.6" height="1.6" fill="#c47ef5"/>
<rect x="724.2" y="128.2" width="1.6" height="1.6" fill="#c47ef5"/>
<rect x="724.2" y="130.4" width="1.6" height="1.6" fill="#c47ef5"/>
<rect x="726.4" y="126.0" width="1.6" height="1.6" fill="#c47ef5"/>
<rect x="726.4" y="128.2" width="1.6" height="1.6" fill="#c47ef5"/>
<rect x="726.4" y="130.4" width="1.6" height="1.6" fill="#c47ef5"/>
<rect x="728.6" y="126.0" width="1.6" height="1.6" fill="#c47ef5"/>
<rect x="728.6" y="128.2" width="1.6" height="1.6" fill="#c47ef5"/>
<rect x="728.6" y="130.4" width="1.6" height="1.6" fill="#c47ef5"/>
<text x="731.5" y="131.3" font-size="7.8" font-weight="normal" font-style="normal" fill="#ececec" text-anchor="start" textLength="11.7" lengthAdjust="spacingAndGlyphs" stroke="#ececec" stroke-width="0.18">Item</text>
<circle cx="727.2" cy="141.8" r="2.95" fill="#2cd6a8"/><path d="M729.5 140.4L731.5 141.8L729.5 143.20000000000002Z" fill="#2cd6a8"/>
<text x="733.5" y="144.3" font-size="7.8" font-weight="normal" font-style="normal" fill="#ececec" text-anchor="start" textLength="21.5" lengthAdjust="spacingAndGlyphs" stroke="#ececec" stroke-width="0.18">Amount</text>
<circle cx="727.2" cy="155.8" r="2.5" fill="none" stroke="#9a0c0c" stroke-width="1.2"/><path d="M729.6 154.3L731.5 155.8L729.6 157.3Z" fill="#9a0c0c"/>
<text x="733.5" y="157.8" font-size="7.8" font-weight="normal" font-style="normal" fill="#ececec" text-anchor="start" textLength="36.0" lengthAdjust="spacingAndGlyphs" stroke="#ececec" stroke-width="0.18">Remove Item</text>
<rect x="772.9" y="152.9" width="6.8" height="6.8" rx="1.5" fill="#151515" stroke="#d8d8d8" stroke-width="1.1"/>
<text x="814.0" y="118.3" font-size="7.8" font-weight="normal" font-style="normal" fill="#ececec" text-anchor="start" textLength="31.0" lengthAdjust="spacingAndGlyphs" stroke="#ececec" stroke-width="0.18">Item Found</text>
<circle cx="850.8000000000001" cy="115.8" r="2.95" fill="#a50b0b"/><path d="M853.1 114.39999999999999L855.1 115.8L853.1 117.2Z" fill="#a50b0b"/>
<text x="821.0" y="131.1" font-size="7.8" font-weight="normal" font-style="normal" fill="#ececec" text-anchor="start" textLength="24.0" lengthAdjust="spacingAndGlyphs" stroke="#ececec" stroke-width="0.18">Inv Slots</text>
<circle cx="850.8000000000001" cy="128.7" r="2.5" fill="none" stroke="#1874c4" stroke-width="1.2"/><path d="M853.2 127.19999999999999L855.1 128.7L853.2 130.2Z" fill="#1874c4"/>
<rect x="631.1" y="114.6" width="70.29999999999995" height="16.700000000000017" rx="7.8500000000000085" fill="#000" opacity="0.5" filter="url(#blur1)"/>
<rect x="631.6" y="113.6" width="69.29999999999995" height="15.700000000000017" rx="7.3500000000000085" fill="#222"/>
<rect x="632.4" y="114.39999999999999" width="67.69999999999996" height="14.100000000000017" rx="6.650000000000008" fill="url(#gpill)"/>
<rect x="632.4" y="114.39999999999999" width="67.69999999999996" height="14.100000000000017" rx="6.650000000000008" fill="url(#tblue)"/>
<text x="640.8" y="124.2" font-size="7.6" font-weight="normal" font-style="normal" fill="#ececec" text-anchor="start" textLength="44.2" lengthAdjust="spacingAndGlyphs" >Player Inventory</text>
<circle cx="690.6" cy="121.5" r="2.95" fill="#1aa5f5"/><path d="M692.9 120.1L694.9 121.5L692.9 122.9Z" fill="#1aa5f5"/>
<rect x="623.7" y="138.5" width="75.79999999999995" height="16.599999999999994" rx="7.799999999999997" fill="#000" opacity="0.5" filter="url(#blur1)"/>
<rect x="624.2" y="137.5" width="74.79999999999995" height="15.599999999999994" rx="7.299999999999997" fill="#222"/>
<rect x="625.0" y="138.3" width="73.19999999999996" height="13.999999999999995" rx="6.599999999999997" fill="url(#gpill)"/>
<rect x="625.0" y="138.3" width="73.19999999999996" height="13.999999999999995" rx="6.599999999999997" fill="url(#tpurple)"/>
<text x="633.2" y="148.1" font-size="7.6" font-weight="normal" font-style="normal" fill="#ececec" text-anchor="start" textLength="51.1" lengthAdjust="spacingAndGlyphs" >Ammo Item Names</text>
<rect x="687.0" y="142.3" width="1.6" height="1.6" fill="#c47ef5"/>
<rect x="687.0" y="144.5" width="1.6" height="1.6" fill="#c47ef5"/>
<rect x="687.0" y="146.7" width="1.6" height="1.6" fill="#c47ef5"/>
<rect x="689.2" y="142.3" width="1.6" height="1.6" fill="#c47ef5"/>
<rect x="689.2" y="144.5" width="1.6" height="1.6" fill="#c47ef5"/>
<rect x="689.2" y="146.7" width="1.6" height="1.6" fill="#c47ef5"/>
<rect x="691.4" y="142.3" width="1.6" height="1.6" fill="#c47ef5"/>
<rect x="691.4" y="144.5" width="1.6" height="1.6" fill="#c47ef5"/>
<rect x="691.4" y="146.7" width="1.6" height="1.6" fill="#c47ef5"/>
<rect x="622.6" y="159" width="88.1" height="19.6" rx="9.8" fill="#e89600"/>
<rect x="623.7" y="161.6" width="85.89999999999998" height="17.400000000000006" rx="8.200000000000003" fill="#000" opacity="0.5" filter="url(#blur1)"/>
<rect x="624.2" y="160.6" width="84.89999999999998" height="16.400000000000006" rx="7.700000000000003" fill="#222"/>
<rect x="625.0" y="161.4" width="83.29999999999998" height="14.800000000000006" rx="7.000000000000003" fill="url(#gpill)"/>
<rect x="625.0" y="161.4" width="83.29999999999998" height="14.800000000000006" rx="7.000000000000003" fill="url(#tgreen)"/>
<text x="632.8" y="171.6" font-size="7.6" font-weight="normal" font-style="normal" fill="#ececec" text-anchor="start" textLength="60.1" lengthAdjust="spacingAndGlyphs" >Chamber Add Amount</text>
<circle cx="698.2" cy="168.8" r="2.95" fill="#2cd6a8"/><path d="M700.5 167.4L702.5 168.8L700.5 170.20000000000002Z" fill="#2cd6a8"/>
<rect x="889.9" y="82.9" width="86.5" height="42.599999999999994" rx="4.5" fill="#000" opacity="0.45" filter="url(#blur1)"/>
<rect x="890.4" y="82.4" width="85.0" height="41.099999999999994" rx="3.5" fill="#000"/>
<rect x="891.1999999999999" y="83.2" width="83.4" height="39.49999999999999" rx="3.0" fill="#1b1b1b"/>
<path d="M891.1999999999999 93.80000000000001V86.2Q891.1999999999999 83.2 894.1999999999999 83.2H971.6Q974.6 83.2 974.6 86.2V93.80000000000001Z" fill="url(#gpure)"/>
<text x="905.7" y="91.4" font-size="8" font-weight="bold" font-style="normal" fill="#000" fill-opacity="0.35" text-anchor="start" textLength="20.5" lengthAdjust="spacingAndGlyphs">Branch</text>
<text x="904.9" y="90.6" font-size="8" font-weight="bold" font-style="normal" fill="#f0f0f0" text-anchor="start" textLength="20.5" lengthAdjust="spacingAndGlyphs" >Branch</text>
<path d="M894.8 88.80000000000001L897.0 88.80000000000001Q897.6 85.60000000000001 900.6 85.60000000000001M897.0 88.80000000000001Q897.6 91.9 900.6 91.9" fill="none" stroke="#e4e4e4" stroke-width="1.1"/><circle cx="900.8" cy="85.60000000000001" r="0.9" fill="#eee"/><circle cx="900.8" cy="91.9" r="0.9" fill="#eee"/>
<path d="M896.1 98.60000000000001H899.4L902.1 102.10000000000001L899.4 105.60000000000001H896.1Z" fill="#f4f4f4"/>
<circle cx="899.3000000000001" cy="115.2" r="2.95" fill="#a50b0b"/><path d="M901.6 113.8L903.6 115.2L901.6 116.60000000000001Z" fill="#a50b0b"/>
<text x="905.8" y="117.8" font-size="8" font-weight="normal" font-style="normal" fill="#ececec" text-anchor="start" textLength="26.4" lengthAdjust="spacingAndGlyphs" stroke="#ececec" stroke-width="0.18">Condition</text>
<text x="949.3" y="104.7" font-size="8" font-weight="normal" font-style="normal" fill="#ececec" text-anchor="start" textLength="12.2" lengthAdjust="spacingAndGlyphs" stroke="#ececec" stroke-width="0.18">True</text>
<path d="M963.8 98.60000000000001H967.0999999999999L969.8 102.10000000000001L967.0999999999999 105.60000000000001H963.8Z" fill="#f4f4f4"/>
<text x="946.3" y="117.8" font-size="8" font-weight="normal" font-style="normal" fill="#ececec" text-anchor="start" textLength="15.2" lengthAdjust="spacingAndGlyphs" stroke="#ececec" stroke-width="0.18">False</text>
<path d="M964.3 112.2H966.9L969.1999999999999 115.2L966.9 118.2H964.3Z" fill="none" stroke="#f4f4f4" stroke-width="1"/>
<rect x="170.1" y="341.5" width="133.6" height="36.80000000000001" rx="5" fill="#000" opacity="0.45" filter="url(#blur1)"/>
<rect x="170.6" y="341" width="132.1" height="35.30000000000001" rx="4" fill="#000"/>
<rect x="171.4" y="341.8" width="130.5" height="33.70000000000001" rx="3.5" fill="#1b1b1b"/>
<path d="M171.4 360.8V344.8Q171.4 341.8 174.4 341.8H298.9Q301.9 341.8 301.9 344.8V360.8Z" fill="url(#gevent)"/>
<path d="M175.5 346.6L179.2 342.9L182.9 346.6L179.2 350.3Z" fill="none" stroke="#f0f0f0" stroke-width="1.3"/>
<text x="185.6" y="350.0" font-size="8" font-weight="bold" font-style="normal" fill="#000" fill-opacity="0.35" text-anchor="start" textLength="103.2" lengthAdjust="spacingAndGlyphs">Event SGK Chamber Weapon Ammo</text>
<text x="184.8" y="349.2" font-size="8" font-weight="bold" font-style="normal" fill="#f4f4f4" text-anchor="start" textLength="103.2" lengthAdjust="spacingAndGlyphs" >Event SGK Chamber Weapon Ammo</text>
<text x="184.8" y="357.8" font-size="7.6" font-weight="normal" font-style="italic" fill="#b88e7e" text-anchor="start" textLength="86.0" lengthAdjust="spacingAndGlyphs" >From BP SGKHoldable Interface</text>
<rect x="295.5" y="348.5" width="4.2" height="4.2" fill="#111" stroke="#e02020" stroke-width="1"/>
<path d="M291.3 365.3H294.6L297.3 368.8L294.6 372.3H291.3Z" fill="#f4f4f4"/>
<rect x="297" y="335" width="11" height="11" rx="1.5" fill="#3a78b0"/><circle cx="301" cy="338.5" r="1.8" fill="none" stroke="#fff" stroke-width="0.9"/><path d="M299 346L302 341M304 336V345" stroke="#eee" stroke-width="0.9"/>
<rect x="83.69999999999999" y="460" width="75.0" height="16" rx="7.5" fill="#000" opacity="0.5" filter="url(#blur1)"/>
<rect x="84.19999999999999" y="459" width="74.0" height="15" rx="7.0" fill="#222"/>
<rect x="84.99999999999999" y="459.8" width="72.4" height="13.4" rx="6.3" fill="url(#gpill)"/>
<rect x="84.99999999999999" y="459.8" width="72.4" height="13.4" rx="6.3" fill="url(#tblue)"/>
<text x="92.8" y="469.4" font-size="7.6" font-weight="normal" font-style="normal" fill="#ececec" text-anchor="start" textLength="48.7" lengthAdjust="spacingAndGlyphs" >Weapon Inventory</text>
<circle cx="146.7" cy="466.5" r="2.95" fill="#1aa5f5"/><path d="M149.0 465.1L151.0 466.5L149.0 467.9Z" fill="#1aa5f5"/>
<rect x="161.7" y="459.8" width="97.60000000000002" height="16.19999999999999" rx="7.599999999999994" fill="#000" opacity="0.5" filter="url(#blur1)"/>
<rect x="162.2" y="458.8" width="96.60000000000002" height="15.199999999999989" rx="7.099999999999994" fill="#222"/>
<rect x="163.0" y="459.6" width="95.00000000000003" height="13.599999999999989" rx="6.399999999999994" fill="url(#gpill)"/>
<rect x="163.0" y="459.6" width="95.00000000000003" height="13.599999999999989" rx="6.399999999999994" fill="url(#tgreen)"/>
<circle cx="171.5" cy="466.5" r="2.95" fill="#1aa5f5"/><path d="M173.8 465.1L175.8 466.5L173.8 467.9Z" fill="#1aa5f5"/>
<text x="178.9" y="469.4" font-size="7.6" font-weight="normal" font-style="normal" fill="#ececec" text-anchor="start" textLength="17.6" lengthAdjust="spacingAndGlyphs" >Target</text>
<text x="212.5" y="469.4" font-size="7.6" font-weight="normal" font-style="normal" fill="#ececec" text-anchor="start" textLength="30.0" lengthAdjust="spacingAndGlyphs" >Item Count</text>
<circle cx="248.0" cy="466.5" r="2.95" fill="#2cd6a8"/><path d="M250.3 465.1L252.3 466.5L250.3 467.9Z" fill="#2cd6a8"/>
<rect x="192.8" y="490.8" width="65.69999999999999" height="16.5" rx="7.75" fill="#000" opacity="0.5" filter="url(#blur1)"/>
<rect x="193.3" y="489.8" width="64.69999999999999" height="15.5" rx="7.25" fill="#222"/>
<rect x="194.10000000000002" y="490.6" width="63.09999999999999" height="13.9" rx="6.55" fill="url(#gpill)"/>
<rect x="194.10000000000002" y="490.6" width="63.09999999999999" height="13.9" rx="6.55" fill="url(#tgreen)"/>
<text x="210.5" y="500.8" font-size="7.6" font-weight="normal" font-style="normal" fill="#ececec" text-anchor="start" textLength="30.8" lengthAdjust="spacingAndGlyphs" >Max Ammo</text>
<circle cx="247.09999999999997" cy="497.9" r="2.95" fill="#2cd6a8"/><path d="M249.39999999999998 496.5L251.39999999999998 497.9L249.39999999999998 499.29999999999995Z" fill="#2cd6a8"/>
<circle cx="158.10000000000002" cy="455" r="3" fill="#f0f0f0"/><circle cx="161.3" cy="457.6" r="3" fill="#dadada"/><circle cx="160.70000000000002" cy="456.8" r="1.6" fill="#ffffff"/>
<circle cx="258.3" cy="455" r="3" fill="#f0f0f0"/><circle cx="261.5" cy="457.6" r="3" fill="#dadada"/><circle cx="260.90000000000003" cy="456.8" r="1.6" fill="#ffffff"/>
<rect x="263.8" y="466.5" width="51.89999999999998" height="26.19999999999999" rx="6" fill="#000" opacity="0.45" filter="url(#blur1)"/>
<rect x="264.3" y="466" width="50.39999999999998" height="24.69999999999999" rx="5" fill="#262626"/>
<rect x="265.1" y="466.8" width="48.799999999999976" height="23.099999999999987" rx="4.5" fill="url(#gop)"/>
<circle cx="272.8" cy="472.4" r="2.95" fill="#2cd6a8"/><path d="M275.1 471.0L277.1 472.4L275.1 473.79999999999995Z" fill="#2cd6a8"/>
<circle cx="272.8" cy="483.8" r="2.95" fill="#2cd6a8"/><path d="M275.1 482.40000000000003L277.1 483.8L275.1 485.2Z" fill="#2cd6a8"/>
<path d="M291.6 476.9L286.3 479.6L291.6 482.3" fill="none" stroke="#d4d4d4" stroke-width="1.2"/>
<circle cx="305.0" cy="478.5" r="2.95" fill="#a50b0b"/><path d="M307.3 477.1L309.3 478.5L307.3 479.9Z" fill="#a50b0b"/>
<rect x="333.8" y="388.1" width="86.80000000000001" height="43.099999999999966" rx="4.5" fill="#000" opacity="0.45" filter="url(#blur1)"/>
<rect x="334.3" y="387.6" width="85.30000000000001" height="41.599999999999966" rx="3.5" fill="#000"/>
<rect x="335.1" y="388.40000000000003" width="83.70000000000002" height="39.999999999999964" rx="3.0" fill="#1b1b1b"/>
<path d="M335.1 399.0V391.40000000000003Q335.1 388.40000000000003 338.1 388.40000000000003H415.8Q418.8 388.40000000000003 418.8 391.40000000000003V399.0Z" fill="url(#gpure)"/>
<text x="349.6" y="396.6" font-size="8" font-weight="bold" font-style="normal" fill="#000" fill-opacity="0.35" text-anchor="start" textLength="20.5" lengthAdjust="spacingAndGlyphs">Branch</text>
<text x="348.8" y="395.8" font-size="8" font-weight="bold" font-style="normal" fill="#f0f0f0" text-anchor="start" textLength="20.5" lengthAdjust="spacingAndGlyphs" >Branch</text>
<path d="M338.7 394.0L340.90000000000003 394.0Q341.5 390.8 344.5 390.8M340.90000000000003 394.0Q341.5 397.1 344.5 397.1" fill="none" stroke="#e4e4e4" stroke-width="1.1"/><circle cx="344.7" cy="390.8" r="0.9" fill="#eee"/><circle cx="344.7" cy="397.1" r="0.9" fill="#eee"/>
<path d="M340.0 403.8H343.3L346.0 407.3L343.3 410.8H340.0Z" fill="#f4f4f4"/>
<circle cx="343.2" cy="420.40000000000003" r="2.95" fill="#a50b0b"/><path d="M345.5 419.00000000000006L347.5 420.40000000000003L345.5 421.8Z" fill="#a50b0b"/>
<text x="349.7" y="423.0" font-size="8" font-weight="normal" font-style="normal" fill="#ececec" text-anchor="start" textLength="26.4" lengthAdjust="spacingAndGlyphs" stroke="#ececec" stroke-width="0.18">Condition</text>
<text x="393.5" y="409.9" font-size="8" font-weight="normal" font-style="normal" fill="#ececec" text-anchor="start" textLength="12.2" lengthAdjust="spacingAndGlyphs" stroke="#ececec" stroke-width="0.18">True</text>
<path d="M408.0 403.8H411.3L414.0 407.3L411.3 410.8H408.0Z" fill="#f4f4f4"/>
<text x="390.5" y="423.0" font-size="8" font-weight="normal" font-style="normal" fill="#ececec" text-anchor="start" textLength="15.2" lengthAdjust="spacingAndGlyphs" stroke="#ececec" stroke-width="0.18">False</text>
<path d="M408.0 416.90000000000003H411.3L414.0 420.40000000000003L411.3 423.90000000000003H408.0Z" fill="#f4f4f4"/>
<rect x="575.7" y="379.0" width="146.70000000000005" height="94.29999999999995" rx="5" fill="#000" opacity="0.45" filter="url(#blur1)"/>
<rect x="576.2" y="378.5" width="145.20000000000005" height="92.79999999999995" rx="5" fill="#f0a000"/>
<rect x="577.7" y="380.0" width="142.20000000000005" height="89.79999999999995" rx="4" fill="#1b1b1b"/>
<path d="M577.7 400.0V383.0Q577.7 380.0 580.7 380.0H716.9000000000001Q719.9000000000001 380.0 719.9000000000001 383.0V400.0Z" fill="url(#gfunc)"/>
<path d="M588.8000000000001 381.7Q586.8000000000001 381.1 586.2 384.5L585.4000000000001 389.1Q584.8000000000001 392.1 582.8000000000001 391.1" fill="none" stroke="#6fb4e8" stroke-width="1.1"/>
<text x="592.9" y="389.2" font-size="8" font-weight="bold" font-style="normal" fill="#000" fill-opacity="0.35" text-anchor="start" textLength="113.3" lengthAdjust="spacingAndGlyphs">Search Player Inventory for Multi Items</text>
<text x="592.1" y="388.4" font-size="8" font-weight="bold" font-style="normal" fill="#f0f0f0" text-anchor="start" textLength="113.3" lengthAdjust="spacingAndGlyphs" >Search Player Inventory for Multi Items</text>
<text x="592.1" y="397.7" font-size="7.6" font-weight="normal" font-style="italic" fill="#8fb0c4" text-anchor="start" textLength="78.3" lengthAdjust="spacingAndGlyphs" >Target is BP Player Inventory</text>
<path d="M583.4000000000001 404.7H586.7L589.4000000000001 408.2L586.7 411.7H583.4000000000001Z" fill="#f4f4f4"/>
<path d="M708.2 404.7H711.5L714.2 408.2L711.5 411.7H708.2Z" fill="#f4f4f4"/>
<circle cx="586.6000000000001" cy="421.5" r="2.95" fill="#1aa5f5"/><path d="M588.9000000000001 420.1L590.9000000000001 421.5L588.9000000000001 422.9Z" fill="#1aa5f5"/>
<text x="592.9" y="424.0" font-size="7.8" font-weight="normal" font-style="normal" fill="#ececec" text-anchor="start" textLength="17.5" lengthAdjust="spacingAndGlyphs" stroke="#ececec" stroke-width="0.18">Target</text>
<rect x="583.6" y="431.7" width="1.6" height="1.6" fill="#c47ef5"/>
<rect x="583.6" y="433.9" width="1.6" height="1.6" fill="#c47ef5"/>
<rect x="583.6" y="436.1" width="1.6" height="1.6" fill="#c47ef5"/>
<rect x="585.8" y="431.7" width="1.6" height="1.6" fill="#c47ef5"/>
<rect x="585.8" y="433.9" width="1.6" height="1.6" fill="#c47ef5"/>
<rect x="585.8" y="436.1" width="1.6" height="1.6" fill="#c47ef5"/>
<rect x="588.0" y="431.7" width="1.6" height="1.6" fill="#c47ef5"/>
<rect x="588.0" y="433.9" width="1.6" height="1.6" fill="#c47ef5"/>
<rect x="588.0" y="436.1" width="1.6" height="1.6" fill="#c47ef5"/>
<text x="590.9" y="437.0" font-size="7.8" font-weight="normal" font-style="normal" fill="#ececec" text-anchor="start" textLength="11.7" lengthAdjust="spacingAndGlyphs" stroke="#ececec" stroke-width="0.18">Item</text>
<circle cx="586.6000000000001" cy="447.5" r="2.95" fill="#2cd6a8"/><path d="M588.9000000000001 446.1L590.9000000000001 447.5L588.9000000000001 448.9Z" fill="#2cd6a8"/>
<text x="592.9" y="450.0" font-size="7.8" font-weight="normal" font-style="normal" fill="#ececec" text-anchor="start" textLength="21.5" lengthAdjust="spacingAndGlyphs" stroke="#ececec" stroke-width="0.18">Amount</text>
<circle cx="586.6000000000001" cy="461.5" r="2.5" fill="none" stroke="#9a0c0c" stroke-width="1.2"/><path d="M589.0000000000001 460.0L590.9000000000001 461.5L589.0000000000001 463.0Z" fill="#9a0c0c"/>
<text x="592.9" y="463.5" font-size="7.8" font-weight="normal" font-style="normal" fill="#ececec" text-anchor="start" textLength="36.0" lengthAdjust="spacingAndGlyphs" stroke="#ececec" stroke-width="0.18">Remove Item</text>
<rect x="632.3000000000001" y="458.6" width="6.8" height="6.8" rx="1.5" fill="#151515" stroke="#d8d8d8" stroke-width="1.1"/>
<text x="673.4" y="424.0" font-size="7.8" font-weight="normal" font-style="normal" fill="#ececec" text-anchor="start" textLength="31.0" lengthAdjust="spacingAndGlyphs" stroke="#ececec" stroke-width="0.18">Item Found</text>
<circle cx="710.2000000000002" cy="421.5" r="2.95" fill="#a50b0b"/><path d="M712.5000000000001 420.1L714.5000000000001 421.5L712.5000000000001 422.9Z" fill="#a50b0b"/>
<text x="680.4" y="436.8" font-size="7.8" font-weight="normal" font-style="normal" fill="#ececec" text-anchor="start" textLength="24.0" lengthAdjust="spacingAndGlyphs" stroke="#ececec" stroke-width="0.18">Inv Slots</text>
<circle cx="710.2000000000002" cy="434.4" r="2.5" fill="none" stroke="#1874c4" stroke-width="1.2"/><path d="M712.6000000000001 432.9L714.5000000000001 434.4L712.6000000000001 435.9Z" fill="#1874c4"/>
<rect x="490.3" y="420.0" width="70.2999999999999" height="16.69999999999999" rx="7.849999999999994" fill="#000" opacity="0.5" filter="url(#blur1)"/>
<rect x="490.8" y="419.0" width="69.2999999999999" height="15.699999999999989" rx="7.349999999999994" fill="#222"/>
<rect x="491.6" y="419.8" width="67.6999999999999" height="14.099999999999989" rx="6.649999999999994" fill="url(#gpill)"/>
<rect x="491.6" y="419.8" width="67.6999999999999" height="14.099999999999989" rx="6.649999999999994" fill="url(#tblue)"/>
<text x="500.0" y="429.6" font-size="7.6" font-weight="normal" font-style="normal" fill="#ececec" text-anchor="start" textLength="44.2" lengthAdjust="spacingAndGlyphs" >Player Inventory</text>
<circle cx="549.8" cy="426.9" r="2.95" fill="#1aa5f5"/><path d="M552.0999999999999 425.5L554.0999999999999 426.9L552.0999999999999 428.29999999999995Z" fill="#1aa5f5"/>
<rect x="482.90000000000003" y="443.9" width="75.80000000000001" height="16.600000000000023" rx="7.800000000000011" fill="#000" opacity="0.5" filter="url(#blur1)"/>
<rect x="483.40000000000003" y="442.9" width="74.80000000000001" height="15.600000000000023" rx="7.300000000000011" fill="#222"/>
<rect x="484.20000000000005" y="443.7" width="73.20000000000002" height="14.000000000000023" rx="6.600000000000011" fill="url(#gpill)"/>
<rect x="484.20000000000005" y="443.7" width="73.20000000000002" height="14.000000000000023" rx="6.600000000000011" fill="url(#tpurple)"/>
<text x="492.4" y="453.5" font-size="7.6" font-weight="normal" font-style="normal" fill="#ececec" text-anchor="start" textLength="51.1" lengthAdjust="spacingAndGlyphs" >Ammo Item Names</text>
<rect x="546.2" y="447.7" width="1.6" height="1.6" fill="#c47ef5"/>
<rect x="546.2" y="449.9" width="1.6" height="1.6" fill="#c47ef5"/>
<rect x="546.2" y="452.1" width="1.6" height="1.6" fill="#c47ef5"/>
<rect x="548.4" y="447.7" width="1.6" height="1.6" fill="#c47ef5"/>
<rect x="548.4" y="449.9" width="1.6" height="1.6" fill="#c47ef5"/>
<rect x="548.4" y="452.1" width="1.6" height="1.6" fill="#c47ef5"/>
<rect x="550.6" y="447.7" width="1.6" height="1.6" fill="#c47ef5"/>
<rect x="550.6" y="449.9" width="1.6" height="1.6" fill="#c47ef5"/>
<rect x="550.6" y="452.1" width="1.6" height="1.6" fill="#c47ef5"/>
<rect x="481.8" y="464.4" width="88.1" height="19.6" rx="9.8" fill="#e89600"/>
<rect x="482.90000000000003" y="467.0" width="85.89999999999992" height="17.399999999999977" rx="8.199999999999989" fill="#000" opacity="0.5" filter="url(#blur1)"/>
<rect x="483.40000000000003" y="466.0" width="84.89999999999992" height="16.399999999999977" rx="7.699999999999989" fill="#222"/>
<rect x="484.20000000000005" y="466.8" width="83.29999999999993" height="14.799999999999978" rx="6.9999999999999885" fill="url(#gpill)"/>
<rect x="484.20000000000005" y="466.8" width="83.29999999999993" height="14.799999999999978" rx="6.9999999999999885" fill="url(#tgreen)"/>
<text x="492.0" y="477.0" font-size="7.6" font-weight="normal" font-style="normal" fill="#ececec" text-anchor="start" textLength="60.1" lengthAdjust="spacingAndGlyphs" >Chamber Add Amount</text>
<circle cx="557.4000000000001" cy="474.2" r="2.95" fill="#2cd6a8"/><path d="M559.7 472.8L561.7 474.2L559.7 475.59999999999997Z" fill="#2cd6a8"/>
<rect x="749.0" y="388.0" width="87.0" height="42.89999999999998" rx="4.5" fill="#000" opacity="0.45" filter="url(#blur1)"/>
<rect x="749.5" y="387.5" width="85.5" height="41.39999999999998" rx="3.5" fill="#000"/>
<rect x="750.3" y="388.3" width="83.9" height="39.799999999999976" rx="3.0" fill="#1b1b1b"/>
<path d="M750.3 398.9V391.3Q750.3 388.3 753.3 388.3H831.2Q834.2 388.3 834.2 391.3V398.9Z" fill="url(#gpure)"/>
<text x="764.8" y="396.5" font-size="8" font-weight="bold" font-style="normal" fill="#000" fill-opacity="0.35" text-anchor="start" textLength="20.5" lengthAdjust="spacingAndGlyphs">Branch</text>
<text x="764.0" y="395.7" font-size="8" font-weight="bold" font-style="normal" fill="#f0f0f0" text-anchor="start" textLength="20.5" lengthAdjust="spacingAndGlyphs" >Branch</text>
<path d="M753.9 393.9L756.1 393.9Q756.7 390.7 759.7 390.7M756.1 393.9Q756.7 397.0 759.7 397.0" fill="none" stroke="#e4e4e4" stroke-width="1.1"/><circle cx="759.9" cy="390.7" r="0.9" fill="#eee"/><circle cx="759.9" cy="397.0" r="0.9" fill="#eee"/>
<path d="M755.2 403.7H758.5L761.2 407.2L758.5 410.7H755.2Z" fill="#f4f4f4"/>
<circle cx="758.4000000000001" cy="420.3" r="2.95" fill="#a50b0b"/><path d="M760.7 418.90000000000003L762.7 420.3L760.7 421.7Z" fill="#a50b0b"/>
<text x="764.9" y="422.9" font-size="8" font-weight="normal" font-style="normal" fill="#ececec" text-anchor="start" textLength="26.4" lengthAdjust="spacingAndGlyphs" stroke="#ececec" stroke-width="0.18">Condition</text>
<text x="808.9" y="409.8" font-size="8" font-weight="normal" font-style="normal" fill="#ececec" text-anchor="start" textLength="12.2" lengthAdjust="spacingAndGlyphs" stroke="#ececec" stroke-width="0.18">True</text>
<path d="M823.4 403.7H826.6999999999999L829.4 407.2L826.6999999999999 410.7H823.4Z" fill="#f4f4f4"/>
<text x="805.9" y="422.9" font-size="8" font-weight="normal" font-style="normal" fill="#ececec" text-anchor="start" textLength="15.2" lengthAdjust="spacingAndGlyphs" stroke="#ececec" stroke-width="0.18">False</text>
<path d="M823.4 416.8H826.6999999999999L829.4 420.3L826.6999999999999 423.8H823.4Z" fill="#f4f4f4"/>
<rect x="897.6" y="333.6" width="143.39999999999998" height="60.799999999999955" rx="5" fill="#000" opacity="0.45" filter="url(#blur1)"/>
<rect x="898.1" y="333.1" width="141.89999999999998" height="59.299999999999955" rx="4" fill="#000"/>
<rect x="898.9" y="333.90000000000003" width="140.29999999999998" height="57.69999999999995" rx="3.5" fill="#1b1b1b"/>
<path d="M898.9 360.6V336.90000000000003Q898.9 333.90000000000003 901.9 333.90000000000003H1036.2Q1039.2 333.90000000000003 1039.2 336.90000000000003V360.6Z" fill="url(#gfunc)"/>
<path d="M903.1 340.1L906.8000000000001 336.40000000000003L910.5 340.1L906.8000000000001 343.8Z" fill="none" stroke="#f0f0f0" stroke-width="1.3"/>
<text x="913.7" y="341.7" font-size="8" font-weight="bold" font-style="normal" fill="#000" fill-opacity="0.35" text-anchor="start" textLength="77.0" lengthAdjust="spacingAndGlyphs">Server Part Reload Checks</text>
<text x="912.9" y="340.9" font-size="8" font-weight="bold" font-style="normal" fill="#f4f4f4" text-anchor="start" textLength="77.0" lengthAdjust="spacingAndGlyphs" >Server Part Reload Checks</text>
<text x="912.9" y="351.7" font-size="7.6" font-weight="normal" font-style="italic" fill="#98a48e" text-anchor="start" textLength="93.0" lengthAdjust="spacingAndGlyphs" >Target is BP Master Range Weapon</text>
<text x="912.9" y="358.7" font-size="7.6" font-weight="normal" font-style="italic" fill="#98a48e" text-anchor="start" textLength="140.0" lengthAdjust="spacingAndGlyphs" >RELIABLE Replicated To Server (if owning client)</text>
<path d="M903.7 365.6H907.0L909.7 369.1L907.0 372.6H903.7Z" fill="#f4f4f4"/>
<circle cx="906.9000000000001" cy="383.5" r="2.5" fill="none" stroke="#1874c4" stroke-width="1.2"/><path d="M909.3000000000001 382.0L911.2 383.5L909.3000000000001 385.0Z" fill="#1874c4"/>
<text x="913.5" y="385.8" font-size="7.8" font-weight="normal" font-style="normal" fill="#ececec" text-anchor="start" textLength="17.7" lengthAdjust="spacingAndGlyphs" stroke="#ececec" stroke-width="0.18">Target</text>
<rect x="933.8000000000001" y="379.1" width="15.4" height="8.8" fill="none" stroke="#e0e0e0" stroke-width="0.8"/>
<text x="935.6" y="385.8" font-size="7.8" font-weight="normal" font-style="normal" fill="#ececec" text-anchor="start" textLength="11.5" lengthAdjust="spacingAndGlyphs" stroke="#ececec" stroke-width="0.18">self</text>
<rect x="898.0" y="443.2" width="80.0" height="37.30000000000001" rx="7" fill="#000" opacity="0.45" filter="url(#blur1)"/>
<rect x="898.5" y="442.7" width="78.5" height="35.80000000000001" rx="6" fill="#1e1e1e"/>
<rect x="899.3" y="443.5" width="76.9" height="34.20000000000001" rx="5.5" fill="url(#gset)"/>
<rect x="899.5" y="443.7" width="76.5" height="14" rx="6" fill="url(#tred)"/>
<text x="933.5" y="453.1" font-size="7.8" font-weight="bold" font-style="normal" fill="#000" fill-opacity="0.35" text-anchor="start" textLength="10.0" lengthAdjust="spacingAndGlyphs">SET</text>
<text x="932.8" y="452.3" font-size="7.8" font-weight="bold" font-style="normal" fill="#eeeeee" text-anchor="start" textLength="10.0" lengthAdjust="spacingAndGlyphs" >SET</text>
<path d="M904.7 451.2H908.0L910.7 454.7L908.0 458.2H904.7Z" fill="#f4f4f4"/>
<path d="M965.4 451.2H968.6999999999999L971.4 454.7L968.6999999999999 458.2H965.4Z" fill="#f4f4f4"/>
<circle cx="908.7" cy="468.2" r="2.5" fill="none" stroke="#9a0c0c" stroke-width="1.2"/><path d="M911.1 466.7L913.0 468.2L911.1 469.7Z" fill="#9a0c0c"/>
<text x="914.3" y="470.4" font-size="7.8" font-weight="normal" font-style="normal" fill="#ececec" text-anchor="start" textLength="19.0" lengthAdjust="spacingAndGlyphs" stroke="#ececec" stroke-width="0.18">Reload</text>
<rect x="938.3000000000001" y="465.3" width="6.8" height="6.8" rx="1.5" fill="#151515" stroke="#d8d8d8" stroke-width="1.1"/>
<circle cx="967.2" cy="467.7" r="2.5" fill="none" stroke="#9a0c0c" stroke-width="1.2"/><path d="M969.6 466.2L971.5 467.7L969.6 469.2Z" fill="#9a0c0c"/>
<rect x="1007.5" y="419.7" width="33.5" height="75.90000000000003" rx="5" fill="#000" opacity="0.45" filter="url(#blur1)"/>
<rect x="1008" y="419.2" width="32" height="74.40000000000003" rx="4" fill="#000"/>
<rect x="1008.8" y="420.0" width="30.4" height="72.80000000000004" rx="3.5" fill="#1b1b1b"/>
<path d="M1008.8 446.8V423.0Q1008.8 420.0 1011.8 420.0H1036.2Q1039.2 420.0 1039.2 423.0V446.8Z" fill="url(#gfunc)"/>
<path d="M1013.5 423.5L1017 420L1020.5 423.5L1017 427Z" fill="none" stroke="#f0f0f0" stroke-width="1.2"/>
<path d="M1013.7 451.7H1017.0L1019.7 455.2L1017.0 458.7H1013.7Z" fill="#f4f4f4"/>
<circle cx="1016.9000000000001" cy="469.8" r="2.5" fill="none" stroke="#1874c4" stroke-width="1.2"/><path d="M1019.3000000000001 468.3L1021.2 469.8L1019.3000000000001 471.3Z" fill="#1874c4"/>
<circle cx="1016.9000000000001" cy="485" r="2.5" fill="none" stroke="#9a0c0c" stroke-width="1.2"/><path d="M1019.3000000000001 483.5L1021.2 485L1019.3000000000001 486.5Z" fill="#9a0c0c"/>
<rect x="498.1" y="622.9" width="80.5" height="39.10000000000002" rx="7" fill="#000" opacity="0.45" filter="url(#blur1)"/>
<rect x="498.6" y="622.4" width="79.0" height="37.60000000000002" rx="6" fill="#1e1e1e"/>
<rect x="499.40000000000003" y="623.1999999999999" width="77.4" height="36.00000000000002" rx="5.5" fill="url(#gset)"/>
<rect x="499.6" y="623.4" width="77.0" height="14" rx="6" fill="url(#tred)"/>
<text x="533.9" y="632.8" font-size="7.8" font-weight="bold" font-style="normal" fill="#000" fill-opacity="0.35" text-anchor="start" textLength="10.0" lengthAdjust="spacingAndGlyphs">SET</text>
<text x="533.1" y="632.0" font-size="7.8" font-weight="bold" font-style="normal" fill="#eeeeee" text-anchor="start" textLength="10.0" lengthAdjust="spacingAndGlyphs" >SET</text>
<path d="M504.8 630.9H508.1L510.8 634.4L508.1 637.9H504.8Z" fill="#f4f4f4"/>
<path d="M566.0 630.9H569.3L572.0 634.4L569.3 637.9H566.0Z" fill="#f4f4f4"/>
<circle cx="508.8" cy="647.9" r="2.5" fill="none" stroke="#9a0c0c" stroke-width="1.2"/><path d="M511.2 646.4L513.1 647.9L511.2 649.4Z" fill="#9a0c0c"/>
<text x="514.4" y="650.1" font-size="7.8" font-weight="normal" font-style="normal" fill="#ececec" text-anchor="start" textLength="19.0" lengthAdjust="spacingAndGlyphs" stroke="#ececec" stroke-width="0.18">Reload</text>
<rect x="538.4000000000001" y="645.0" width="6.8" height="6.8" rx="1.5" fill="#151515" stroke="#d8d8d8" stroke-width="1.1"/>
<circle cx="567.8000000000001" cy="647.4" r="2.5" fill="none" stroke="#9a0c0c" stroke-width="1.2"/><path d="M570.2 645.9L572.1 647.4L570.2 648.9Z" fill="#9a0c0c"/>
<rect x="607.9" y="599.9" width="164.0" height="92.10000000000002" rx="5" fill="#000" opacity="0.45" filter="url(#blur1)"/>
<rect x="608.4" y="599.4" width="162.5" height="90.60000000000002" rx="4" fill="#000"/>
<rect x="609.1999999999999" y="600.1999999999999" width="160.9" height="89.00000000000003" rx="3.5" fill="#1b1b1b"/>
<path d="M609.1999999999999 627V603.1999999999999Q609.1999999999999 600.1999999999999 612.1999999999999 600.1999999999999H767.1Q770.1 600.1999999999999 770.1 603.1999999999999V627Z" fill="url(#gfunc)"/>
<path d="M613.4 606.4L617.1 602.6999999999999L620.8 606.4L617.1 610.1Z" fill="none" stroke="#f0f0f0" stroke-width="1.3"/>
<text x="624.0" y="608.0" font-size="8" font-weight="bold" font-style="normal" fill="#000" fill-opacity="0.35" text-anchor="start" textLength="50.0" lengthAdjust="spacingAndGlyphs">Client Set Reload</text>
<text x="623.2" y="607.2" font-size="8" font-weight="bold" font-style="normal" fill="#f4f4f4" text-anchor="start" textLength="50.0" lengthAdjust="spacingAndGlyphs" >Client Set Reload</text>
<text x="623.2" y="618.0" font-size="7.6" font-weight="normal" font-style="italic" fill="#98a48e" text-anchor="start" textLength="93.0" lengthAdjust="spacingAndGlyphs" >Target is BP Master Range Weapon</text>
<text x="623.2" y="625.0" font-size="7.6" font-weight="normal" font-style="italic" fill="#98a48e" text-anchor="start" textLength="133.0" lengthAdjust="spacingAndGlyphs" >RELIABLE Replicated To Owning Client (if server)</text>
<path d="M614.0 631.9H617.3L620.0 635.4L617.3 638.9H614.0Z" fill="#f4f4f4"/>
<path d="M759 631.9H762.3L765 635.4L762.3 638.9H759Z" fill="#f4f4f4"/>
<circle cx="617.2" cy="649.8" r="2.5" fill="none" stroke="#1874c4" stroke-width="1.2"/><path d="M619.6 648.3L621.5 649.8L619.6 651.3Z" fill="#1874c4"/>
<text x="623.8" y="652.1" font-size="7.8" font-weight="normal" font-style="normal" fill="#ececec" text-anchor="start" textLength="17.7" lengthAdjust="spacingAndGlyphs" stroke="#ececec" stroke-width="0.18">Target</text>
<rect x="644.1" y="645.4" width="15.4" height="8.8" fill="none" stroke="#e0e0e0" stroke-width="0.8"/>
<text x="645.9" y="652.1" font-size="7.8" font-weight="normal" font-style="normal" fill="#ececec" text-anchor="start" textLength="11.5" lengthAdjust="spacingAndGlyphs" stroke="#ececec" stroke-width="0.18">self</text>
<rect x="811.8" y="600.0" width="162.5" height="92.0" rx="5" fill="#000" opacity="0.45" filter="url(#blur1)"/>
<rect x="812.3" y="599.5" width="161.0" height="90.5" rx="4" fill="#000"/>
<rect x="813.0999999999999" y="600.3" width="159.4" height="88.9" rx="3.5" fill="#1b1b1b"/>
<path d="M813.0999999999999 626.7V603.3Q813.0999999999999 600.3 816.0999999999999 600.3H969.5Q972.5 600.3 972.5 603.3V626.7Z" fill="url(#gfunc)"/>
<path d="M817.3 606.5L821.0 602.8L824.6999999999999 606.5L821.0 610.2Z" fill="none" stroke="#f0f0f0" stroke-width="1.3"/>
<text x="827.9" y="608.1" font-size="8" font-weight="bold" font-style="normal" fill="#000" fill-opacity="0.35" text-anchor="start" textLength="60.0" lengthAdjust="spacingAndGlyphs">Server End Chamber</text>
<text x="827.1" y="607.3" font-size="8" font-weight="bold" font-style="normal" fill="#f4f4f4" text-anchor="start" textLength="60.0" lengthAdjust="spacingAndGlyphs" >Server End Chamber</text>
<text x="827.1" y="618.1" font-size="7.6" font-weight="normal" font-style="italic" fill="#98a48e" text-anchor="start" textLength="80.0" lengthAdjust="spacingAndGlyphs" >Target is BP Player Inventory</text>
<text x="827.1" y="625.1" font-size="7.6" font-weight="normal" font-style="italic" fill="#98a48e" text-anchor="start" textLength="132.0" lengthAdjust="spacingAndGlyphs" >RELIABLE Replicated To Server (if owning client)</text>
<path d="M817.9 632.0H821.1999999999999L823.9 635.5L821.1999999999999 639.0H817.9Z" fill="#f4f4f4"/>
<path d="M962.5 632.7H965.1L967.4 635.7L965.1 638.7H962.5Z" fill="none" stroke="#f4f4f4" stroke-width="1"/>
<circle cx="821.1" cy="649.9" r="2.95" fill="#1aa5f5"/><path d="M823.4 648.5L825.4 649.9L823.4 651.3Z" fill="#1aa5f5"/>
<text x="827.7" y="652.2" font-size="7.8" font-weight="normal" font-style="normal" fill="#ececec" text-anchor="start" textLength="17.7" lengthAdjust="spacingAndGlyphs" stroke="#ececec" stroke-width="0.18">Target</text>
<text x="825.6" y="635.1" font-size="43" font-weight="bold" fill="#ffffff" fill-opacity="0.22" textLength="189.5" lengthAdjust="spacingAndGlyphs">BLUEPRINT</text>
<path d="M366 129.5C378 129.5 378 136 390 136" fill="none" stroke="#2cc7a0" stroke-width="0.9" stroke-opacity="0.9" stroke-linecap="round"/>
<path d="M365 160.9C377 160.9 378 147.4 390 147.4" fill="none" stroke="#2cc7a0" stroke-width="0.9" stroke-opacity="0.9" stroke-linecap="round"/>
<path d="M428 141.6C442 141.6 436 115.2 450 115.2" fill="none" stroke="#9a1010" stroke-width="0.9" stroke-opacity="1" stroke-linecap="round"/>
<path d="M249 466.6C261 466.6 260 472.6 272 472.6" fill="none" stroke="#2cc7a0" stroke-width="0.9" stroke-opacity="0.9" stroke-linecap="round"/>
<path d="M248 497.7C260 497.7 260 484.0 272 484.0" fill="none" stroke="#2cc7a0" stroke-width="0.9" stroke-opacity="0.9" stroke-linecap="round"/>
<path d="M305 478.5C335 478.5 310 420.4 340 420.4" fill="none" stroke="#9a1010" stroke-width="0.9" stroke-opacity="1" stroke-linecap="round"/>
<path d="M267 129.5H288" fill="none" stroke="#22a6f2" stroke-width="0.8" stroke-opacity="0.6" stroke-linecap="round"/>
<path d="M150 466.5H171" fill="none" stroke="#22a6f2" stroke-width="0.8" stroke-opacity="0.6" stroke-linecap="round"/>
<path d="M691 121.5C705 121.5 704 115.8 718 115.8" fill="none" stroke="#22a6f2" stroke-width="0.9" stroke-opacity="0.85" stroke-linecap="round"/>
<path d="M691 145.3C707 145.3 702 128.7 718 128.7" fill="none" stroke="#c07af0" stroke-width="0.9" stroke-opacity="0.85" stroke-linecap="round"/>
<path d="M699 168.8C715 168.8 702 141.8 718 141.8" fill="none" stroke="#2cc7a0" stroke-width="0.9" stroke-opacity="0.85" stroke-linecap="round"/>
<path d="M550.6 426.9C564.6 426.9 563.6 421.5 577.6 421.5" fill="none" stroke="#22a6f2" stroke-width="0.9" stroke-opacity="0.85" stroke-linecap="round"/>
<path d="M550.6 450.8C566.6 450.8 561.6 434.4 577.6 434.4" fill="none" stroke="#c07af0" stroke-width="0.9" stroke-opacity="0.85" stroke-linecap="round"/>
<path d="M558.6 474.5C574.6 474.5 561.6 447.5 577.6 447.5" fill="none" stroke="#2cc7a0" stroke-width="0.9" stroke-opacity="0.85" stroke-linecap="round"/>
<rect x="0" y="0" width="1024" height="29.5" fill="#0c0c0c" fill-opacity="0.86"/>
<rect x="0" y="0" width="1024" height="2" fill="#3a3a3a"/>
<rect x="0" y="0" width="2" height="652" fill="#3a3a3a"/>
<rect x="1022" y="0" width="2" height="652" fill="#3a3a3a"/>
<path d="M23.4 4V27.5M80.6 4V27.5" stroke="#5a5a5a" stroke-width="1"/>
<polygon points="12.40,9.30 14.10,13.45 18.58,13.79 15.16,16.70 16.22,21.06 12.40,18.70 8.58,21.06 9.64,16.70 6.22,13.79 10.70,13.45" fill="none" stroke="#c8c8c8" stroke-width="1"/>
<path d="M31.5 15L38 7.6V12.2H42V17.8H38V22.4Z" fill="#e6e6e6"/>
<path d="M70.3 15L63.8 7.6V12.2H58.6V17.8H63.8V22.4Z" fill="#8a8a8a"/>
<rect x="92" y="10" width="5" height="3.8" fill="#8fb4d6"/><rect x="98.5" y="10" width="5" height="3.8" fill="#8fb4d6"/><rect x="88" y="15.5" width="9" height="6" fill="#8fb4d6"/><rect x="98.5" y="17" width="5" height="3.8" fill="#8fb4d6"/><rect x="90" y="18" width="2" height="1.6" fill="#c040c0"/>
<text x="113.0" y="19.9" font-size="13.5" font-weight="normal" font-style="normal" fill="#a6a6a6" text-anchor="start" textLength="138.0" lengthAdjust="spacingAndGlyphs" >BP_MasterRangeWeapon</text>
<path d="M256.5 11.5L261.5 15.8L256.5 20.1" fill="none" stroke="#b0b0b0" stroke-width="1.5"/>
<text x="268.5" y="19.9" font-size="13.5" font-weight="normal" font-style="normal" fill="#a6a6a6" text-anchor="start" textLength="65.5" lengthAdjust="spacingAndGlyphs" >Event Graph</text>
<path d="M349.2 11.5L354.5 15.8L349.2 20.1" fill="none" stroke="#b0b0b0" stroke-width="1.5"/>
<text x="368.0" y="19.9" font-size="13.5" font-weight="normal" font-style="normal" fill="#a6a6a6" text-anchor="start" textLength="54.0" lengthAdjust="spacingAndGlyphs" >Reloading</text>
<text x="972.5" y="18.9" font-size="13.5" font-weight="bold" font-style="normal" fill="#383838" text-anchor="start" textLength="45.5" lengthAdjust="spacingAndGlyphs" >Zoom -2</text>
</svg></body></html>
